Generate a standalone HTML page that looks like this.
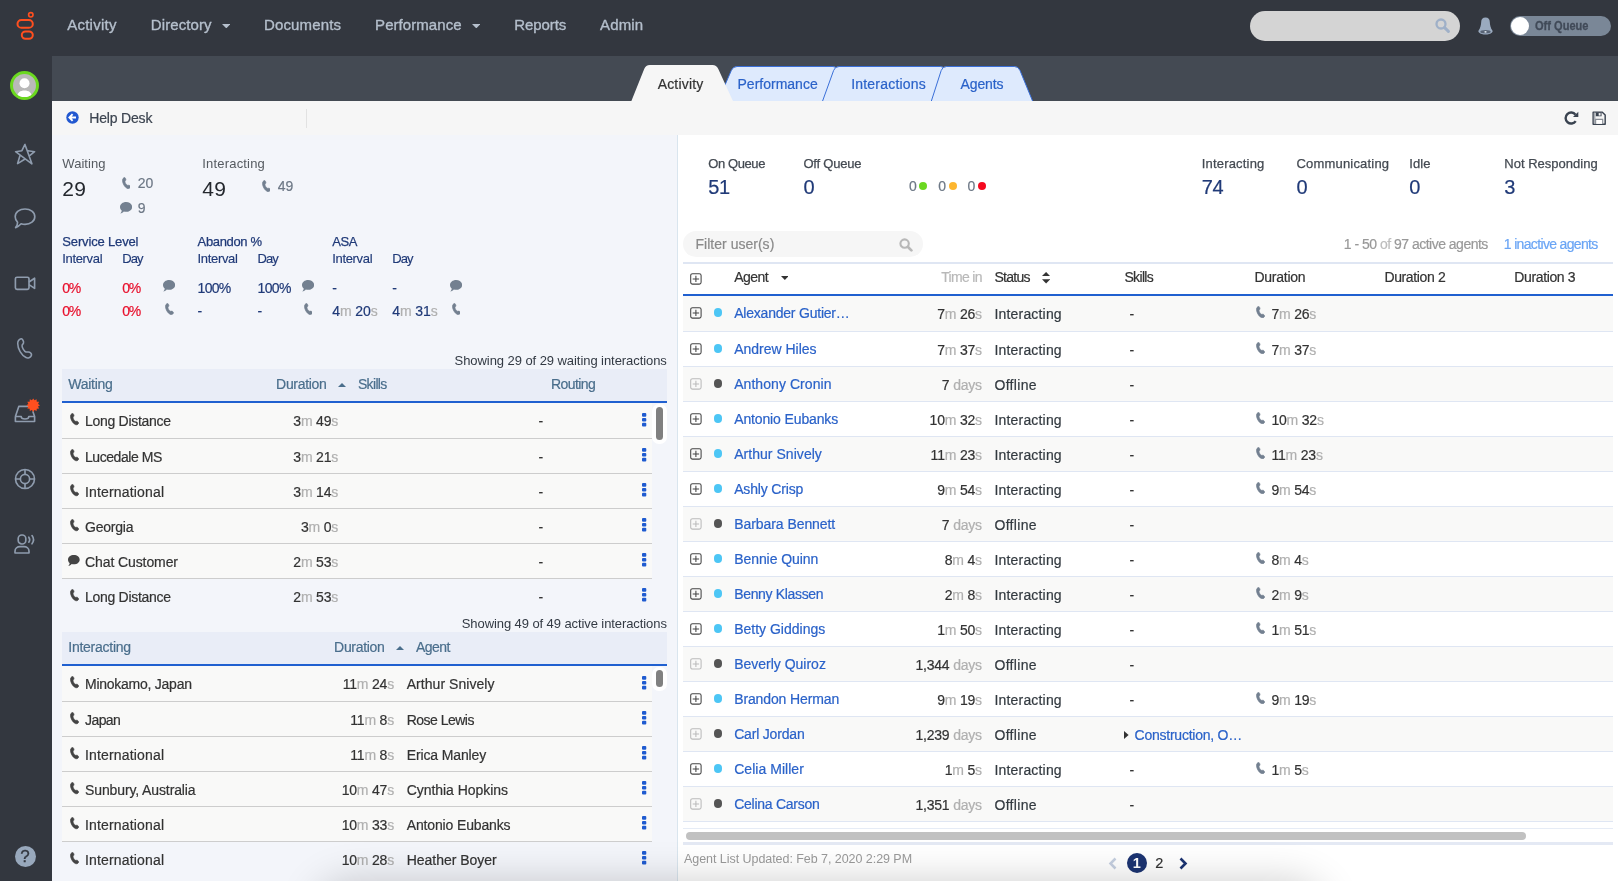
<!DOCTYPE html>
<html lang="en"><head><meta charset="utf-8"><title>Help Desk - Queue Activity</title>
<style>
html,body{margin:0;padding:0}
body{width:1618px;height:881px;overflow:hidden;position:relative;background:#fff;font-family:"Liberation Sans",sans-serif}
.t{position:absolute;white-space:nowrap;line-height:1;display:block}
.b{position:absolute;display:block}
</style></head><body><div id="app" style="position:absolute;left:0;top:0;width:1618px;height:881px;will-change:transform">
<div class="b" style="left:0px;top:0px;width:1618px;height:56px;background:#33373f;"></div>
<div class="b" style="left:0px;top:0px;width:52px;height:881px;background:#33373f;"></div>
<div class="b" style="left:52px;top:56px;width:1566px;height:45px;background:#444a53;"></div>
<div class="b" style="left:52px;top:101px;width:1566px;height:33.7px;background:#f6f6f6;"></div>
<div class="b" style="left:52px;top:134.7px;width:625px;height:746.3px;background:#f3f5fa;"></div>
<div class="b" style="left:677px;top:134.7px;width:941px;height:746.3px;background:#fff;border-left:1px solid #d9e5ee;box-sizing:border-box;"></div>
<svg class="b" style="left:0px;top:0px;" width="52" height="52" viewBox="0 0 52 52"><g fill="none" stroke="#ff4f1f"><circle cx="30.8" cy="14.8" r="2.2" stroke-width="1.65"/><rect x="17.5" y="20" width="15.3" height="7.8" rx="3.9" stroke-width="2"/><rect x="21.8" y="31.4" width="11" height="7.4" rx="3.7" stroke-width="2"/></g></svg>
<span class="t" style="top:17px;font-size:15px;color:#b5bfcc;left:67.2px;letter-spacing:0.249px;-webkit-text-stroke:0.35px;">Activity</span>
<span class="t" style="top:17px;font-size:15px;color:#b5bfcc;left:150.8px;letter-spacing:0.088px;-webkit-text-stroke:0.35px;">Directory</span>
<span class="t" style="top:17px;font-size:15px;color:#b5bfcc;left:264px;letter-spacing:0.149px;-webkit-text-stroke:0.35px;">Documents</span>
<span class="t" style="top:17px;font-size:15px;color:#b5bfcc;left:375.1px;letter-spacing:0.058px;-webkit-text-stroke:0.35px;">Performance</span>
<span class="t" style="top:17px;font-size:15px;color:#b5bfcc;left:514.3px;letter-spacing:-0.088px;-webkit-text-stroke:0.35px;">Reports</span>
<span class="t" style="top:17px;font-size:15px;color:#b5bfcc;left:600.1px;letter-spacing:0.137px;-webkit-text-stroke:0.35px;">Admin</span>
<svg class="b" style="left:221.8px;top:23.5px;" width="8.6" height="4.4" viewBox="0 0 8.6 4.4"><path d="M0 0H8.6L4.3 4.4Z" fill="#b5bfcc"/></svg>
<svg class="b" style="left:471.8px;top:23.5px;" width="8.6" height="4.4" viewBox="0 0 8.6 4.4"><path d="M0 0H8.6L4.3 4.4Z" fill="#b5bfcc"/></svg>
<div class="b" style="left:1250px;top:11px;width:210px;height:30px;background:#d4d4d4;border-radius:15px;"></div>
<svg class="b" style="left:1435px;top:18px;" width="15" height="15" viewBox="0 0 15 15"><circle cx="6" cy="6" r="4.5" fill="none" stroke="#9fb0c8" stroke-width="2.3"/><path d="M9.6 9.6L13.4 13.4" stroke="#9fb0c8" stroke-width="2.9" stroke-linecap="round"/></svg>
<svg class="b" style="left:1477.5px;top:16.5px;" width="15" height="18.5" viewBox="0 0 15 18.5"><path d="M7.5 0.6C4.6 0.6 3.3 2.4 3.2 5C3.1 8.2 2.3 11.2 0.6 13.6C0.2 14.3 0.4 15 1 15.5C2.4 16.9 5 17.6 7.5 17.6C10 17.6 12.6 16.9 14 15.5C14.6 15 14.8 14.3 14.4 13.6C12.7 11.2 11.9 8.2 11.8 5C11.7 2.4 10.4 0.6 7.5 0.6Z" fill="#9aaabf"/><ellipse cx="7.5" cy="14.7" rx="5.2" ry="1.6" fill="#586374"/><ellipse cx="7.5" cy="14.9" rx="1.2" ry="0.8" fill="#dfe6ee"/></svg>
<div class="b" style="left:1510px;top:16px;width:101px;height:20px;background:#7a8797;border-radius:10px;"></div>
<div class="b" style="left:1510.6px;top:16.6px;width:18.8px;height:18.8px;background:#fff;border-radius:50%;"></div>
<span class="t" style="top:19px;font-size:13px;color:#414a58;left:1534.6px;font-weight:700;-webkit-text-stroke:0.3px;transform:scaleX(0.851);transform-origin:0 0;">Off Queue</span>
<div class="b" style="left:10px;top:71px;width:29px;height:29px;background:#b9b9b9;border-radius:50%;border:3px solid #6bd820;box-sizing:border-box;overflow:hidden;"></div>
<svg class="b" style="left:13px;top:74px;" width="23" height="23" viewBox="0 0 23 23"><defs><clipPath id="av"><circle cx="11.5" cy="11.5" r="11.5"/></clipPath></defs><g clip-path="url(#av)" fill="#fff"><circle cx="11.5" cy="9.2" r="5"/><path d="M4.2 23C4.2 18.6 7.4 16.6 11.5 16.6C15.6 16.6 18.8 18.6 18.8 23Z"/></g></svg>
<svg class="b" style="left:13px;top:142px;" width="24" height="24" viewBox="0 0 24 24"><path d="M11.96 2.4L8.9 8.7L2.6 9.7L18.9 21.8Z M15 8.7L21.6 9.7L17.3 13.2 M6.85 14L4.6 21.6L11.3 17.5" fill="none" stroke="#8f9cae" stroke-width="1.6" stroke-linejoin="round" stroke-linecap="round"/></svg>
<svg class="b" style="left:13px;top:207px;" width="24" height="23" viewBox="0 0 24 23"><path d="M12 2C17.5 2 21.8 5.3 21.8 9.7C21.8 14.1 17.5 17.4 12 17.4C10.6 17.4 9.3 17.2 8.1 16.8C6.8 18.3 4.6 19.9 2.6 20.6C3.8 19.1 4.6 17.1 4.6 15.3C3 13.8 2.2 11.9 2.2 9.7C2.2 5.3 6.5 2 12 2Z" fill="none" stroke="#8f9cae" stroke-width="1.65" stroke-linejoin="round"/></svg>
<svg class="b" style="left:13px;top:274px;" width="24" height="18" viewBox="0 0 24 18"><rect x="2.4" y="3.2" width="13.6" height="12.2" rx="1.6" fill="none" stroke="#8f9cae" stroke-width="1.65"/><path d="M16 8L21.6 4.2V14.4L16 10.6" fill="none" stroke="#8f9cae" stroke-width="1.65" stroke-linejoin="round"/></svg>
<svg class="b" style="left:15px;top:336px;" width="20" height="25" viewBox="0 0 20 25"><g transform="translate(2.4,2.6) scale(1.62)"><path d="M2.3 0.1C3.1 -0.1 3.5 1 3.8 2C4.1 3 3.3 3.4 2.9 4C2.6 5.3 4.2 7.8 5.3 8.3C6 8.5 6.6 7.9 7.5 8.4C8.3 8.9 9 9.6 8.6 10.5C8.1 11.7 6.5 12.3 5.3 11.7C2.4 10.3 0.2 6.3 0.2 3C0.2 1.5 1.2 0.4 2.3 0.1Z" fill="none" stroke="#8f9cae" stroke-width="0.95" stroke-linejoin="round"/></g></svg>
<svg class="b" style="left:13px;top:396px;" width="28" height="28" viewBox="0 0 28 28"><path d="M2.4 20.5L5.8 10.4H16.5M2.4 20.5V25.5H21.6V20.5M2.4 20.5H8.2C8.2 22.3 9.8 23 12 23C14.2 23 15.8 22.3 15.8 20.5H21.6L19.8 15.2" fill="none" stroke="#8f9cae" stroke-width="1.65" stroke-linejoin="round"/><polygon fill="#ff4f1f" points="27,9.2 25.03,10.49 26.09,12.6 23.74,12.74 23.6,15.09 21.49,14.03 20.2,16 18.91,14.03 16.8,15.09 16.66,12.74 14.31,12.6 15.37,10.49 13.4,9.2 15.37,7.91 14.31,5.8 16.66,5.66 16.8,3.31 18.91,4.37 20.2,2.4 21.49,4.37 23.6,3.31 23.74,5.66 26.09,5.8 25.03,7.91"/></svg>
<svg class="b" style="left:13px;top:466.5px;" width="24" height="24" viewBox="0 0 24 24"><g fill="none" stroke="#8f9cae" stroke-width="1.65"><circle cx="12" cy="12" r="9.5"/><circle cx="12" cy="12" r="4.6"/><path d="M12 2.5V7.4M12 16.6V21.5M2.5 12H7.4M16.6 12H21.5"/></g></svg>
<svg class="b" style="left:13px;top:532px;" width="24" height="24" viewBox="0 0 24 24"><g fill="none" stroke="#8f9cae" stroke-width="1.65" stroke-linejoin="round"><rect x="5.2" y="3" width="7.6" height="9" rx="3.6"/><path d="M2 21V19.2C2 16.4 4.4 14.6 7 14.6H11C13.6 14.6 16 16.4 16 19.2V21Z"/><path d="M15.8 5.2C16.8 6.6 16.8 8.8 15.8 10.2M19 3.6C20.8 6 20.8 9.4 19 11.8" stroke-linecap="round"/></g></svg>
<div class="b" style="left:14.6px;top:845.6px;width:21px;height:21px;background:#98a8bc;border-radius:50%;"></div>
<span class="t" style="top:848px;font-size:17px;color:#33373f;left:25.1px;-webkit-text-stroke:0.3px;transform:translateX(-50%);">?</span>
<svg class="b" style="left:0;top:0" width="1618" height="101" viewBox="0 0 1618 101"><path d="M716.7 104 L731.3 70.5 Q733 66.5 737 66.5 L833 66.5 Q837 66.5 837.6 70.5 L842.4 104Z" fill="#deeafd" stroke="#3a6fd8" stroke-width="1"/><path d="M821.5 104 L833.6 70.5 Q835 66.5 839 66.5 L940.5 66.5 Q944.5 66.5 945 70.5 L949.4 104Z" fill="#deeafd" stroke="#3a6fd8" stroke-width="1"/><path d="M930.4 104 L941.2 70.5 Q942.5 66.5 946.5 66.5 L1014.4 66.5 Q1018.4 66.5 1020 70.5 L1033.8 104Z" fill="#deeafd" stroke="#3a6fd8" stroke-width="1"/><path d="M630.2 104 L644.2 69 Q645.8 65 649.8 65 L712.5 65 Q716.5 65 718.3 69 L734.3 104Z" fill="#f6f6f6" /></svg>
<span class="t" style="top:77px;font-size:14px;color:#333;left:657.7px;letter-spacing:0.17px;-webkit-text-stroke:0.2px;">Activity</span>
<span class="t" style="top:77px;font-size:14px;color:#2a62c9;left:737.5px;letter-spacing:0.006px;-webkit-text-stroke:0.2px;">Performance</span>
<span class="t" style="top:77px;font-size:14px;color:#2a62c9;left:851.2px;letter-spacing:0.203px;-webkit-text-stroke:0.2px;">Interactions</span>
<span class="t" style="top:77px;font-size:14px;color:#2a62c9;left:960.5px;letter-spacing:-0.097px;-webkit-text-stroke:0.2px;">Agents</span>
<svg class="b" style="left:66.1px;top:111.4px;" width="13" height="13" viewBox="0 0 13 13"><circle cx="6.5" cy="6.5" r="6.2" fill="#2258d0"/><path d="M6.6 3.2L3.4 6.5L6.6 9.8M3.6 6.5H10" fill="none" stroke="#fff" stroke-width="1.9"/></svg>
<span class="t" style="top:111px;font-size:14px;color:#3c4450;left:89.2px;letter-spacing:-0.164px;-webkit-text-stroke:0.2px;">Help Desk</span>
<div class="b" style="left:305.5px;top:108.5px;width:1px;height:19.5px;background:#e2e2e2;"></div>
<svg class="b" style="left:1563.6px;top:111px;" width="15" height="14" viewBox="0 0 15 14"><path d="M11.5 3.7A5.5 5.5 0 1 0 11.7 10.1" fill="none" stroke="#3a4350" stroke-width="2.4"/><path d="M14.3 0.7V6H9Z" fill="#3a4350"/></svg>
<svg class="b" style="left:1591.6px;top:110.6px;" width="15" height="15" viewBox="0 0 15 15"><g transform="scale(0.955)"><path d="M1.2 1.2H10.8L13.8 4.2V13.8H1.2Z" fill="#f6f6f6" stroke="#3a4350" stroke-width="1.5" stroke-linejoin="round"/><path d="M1.9 1.9H3.6V13.1H1.9Z" fill="#a9adb3"/><path d="M4 1.5H10V5.5H4Z" fill="#3a4350"/><path d="M7 2.2H9V4.8H7Z" fill="#f6f6f6"/><path d="M3.8 13.5V8.8H11.2V13.5" fill="#fff" stroke="#8a8f97" stroke-width="1.2"/></g></svg>
<span class="t" style="top:157px;font-size:13px;color:#555a60;left:62.3px;letter-spacing:0.048px;">Waiting</span>
<span class="t" style="top:178px;font-size:21px;color:#23272d;left:62.3px;letter-spacing:0.172px;">29</span>
<svg class="b" style="left:121.6px;top:177px;" width="8.8" height="12.2" viewBox="-0.3 -0.3 9.4 12.6"><path d="M2.3 0.1C3.1 -0.1 3.5 1 3.8 2C4.1 3 3.3 3.4 2.9 4C2.6 5.3 4.2 7.8 5.3 8.3C6 8.5 6.6 7.9 7.5 8.4C8.3 8.9 9 9.6 8.6 10.5C8.1 11.7 6.5 12.3 5.3 11.7C2.4 10.3 0.2 6.3 0.2 3C0.2 1.5 1.2 0.4 2.3 0.1Z" fill="#738090" stroke="#738090" stroke-width="0.7" stroke-linejoin="round"/></svg>
<span class="t" style="top:176px;font-size:14px;color:#6d7886;left:137.8px;letter-spacing:-0.035px;-webkit-text-stroke:0.2px;">20</span>
<svg class="b" style="left:119.9px;top:202.2px;" width="12.3" height="11.5" viewBox="0 0 12.3 11.5"><path d="M6.1 0C9.5 0 12.2 2.2 12.2 4.9C12.2 7.6 9.5 9.8 6.1 9.8C5.3 9.8 4.5 9.7 3.8 9.4C3 10.3 1.7 11.2 0.3 11.4C1.2 10.6 1.7 9.5 1.7 8.4C0.6 7.5 0 6.3 0 4.9C0 2.2 2.7 0 6.1 0Z" fill="#738090"/></svg>
<span class="t" style="top:201px;font-size:14px;color:#6d7886;left:137.8px;-webkit-text-stroke:0.2px;">9</span>
<span class="t" style="top:157px;font-size:13px;color:#555a60;left:202.3px;letter-spacing:0.182px;">Interacting</span>
<span class="t" style="top:178px;font-size:21px;color:#23272d;left:202.3px;letter-spacing:0.272px;">49</span>
<svg class="b" style="left:261.6px;top:179.8px;" width="8.8" height="12.2" viewBox="-0.3 -0.3 9.4 12.6"><path d="M2.3 0.1C3.1 -0.1 3.5 1 3.8 2C4.1 3 3.3 3.4 2.9 4C2.6 5.3 4.2 7.8 5.3 8.3C6 8.5 6.6 7.9 7.5 8.4C8.3 8.9 9 9.6 8.6 10.5C8.1 11.7 6.5 12.3 5.3 11.7C2.4 10.3 0.2 6.3 0.2 3C0.2 1.5 1.2 0.4 2.3 0.1Z" fill="#738090" stroke="#738090" stroke-width="0.7" stroke-linejoin="round"/></svg>
<span class="t" style="top:179px;font-size:14px;color:#6d7886;left:277.8px;letter-spacing:-0.135px;-webkit-text-stroke:0.2px;">49</span>
<span class="t" style="top:235px;font-size:13px;color:#203a78;left:62.3px;letter-spacing:-0.157px;-webkit-text-stroke:0.25px;">Service Level</span>
<span class="t" style="top:252px;font-size:13px;color:#203a78;left:62.3px;letter-spacing:-0.341px;-webkit-text-stroke:0.15px;">Interval</span>
<span class="t" style="top:252px;font-size:13px;color:#203a78;left:122.3px;letter-spacing:-0.939px;-webkit-text-stroke:0.15px;">Day</span>
<span class="t" style="top:235px;font-size:13px;color:#203a78;left:197.6px;letter-spacing:-0.358px;-webkit-text-stroke:0.25px;">Abandon %</span>
<span class="t" style="top:252px;font-size:13px;color:#203a78;left:197.6px;letter-spacing:-0.341px;-webkit-text-stroke:0.15px;">Interval</span>
<span class="t" style="top:252px;font-size:13px;color:#203a78;left:257.6px;letter-spacing:-0.939px;-webkit-text-stroke:0.15px;">Day</span>
<span class="t" style="top:235px;font-size:13px;color:#203a78;left:332.3px;letter-spacing:-0.505px;-webkit-text-stroke:0.25px;">ASA</span>
<span class="t" style="top:252px;font-size:13px;color:#203a78;left:332.3px;letter-spacing:-0.341px;-webkit-text-stroke:0.15px;">Interval</span>
<span class="t" style="top:252px;font-size:13px;color:#203a78;left:392.3px;letter-spacing:-0.939px;-webkit-text-stroke:0.15px;">Day</span>
<span class="t" style="top:281px;font-size:14px;color:#e8112d;left:62.3px;letter-spacing:-1.267px;-webkit-text-stroke:0.2px;">0%</span>
<span class="t" style="top:281px;font-size:14px;color:#e8112d;left:122.3px;letter-spacing:-1.267px;-webkit-text-stroke:0.2px;">0%</span>
<span class="t" style="top:304px;font-size:14px;color:#e8112d;left:62.3px;letter-spacing:-1.267px;-webkit-text-stroke:0.2px;">0%</span>
<span class="t" style="top:304px;font-size:14px;color:#e8112d;left:122.3px;letter-spacing:-1.267px;-webkit-text-stroke:0.2px;">0%</span>
<span class="t" style="top:281px;font-size:14px;color:#203a78;left:197.6px;letter-spacing:-0.726px;-webkit-text-stroke:0.2px;">100%</span>
<span class="t" style="top:281px;font-size:14px;color:#203a78;left:257.5px;letter-spacing:-0.651px;-webkit-text-stroke:0.2px;">100%</span>
<span class="t" style="top:304px;font-size:14px;color:#203a78;left:197.6px;-webkit-text-stroke:0.2px;">-</span>
<span class="t" style="top:304px;font-size:14px;color:#203a78;left:257.5px;-webkit-text-stroke:0.2px;">-</span>
<span class="t" style="top:281px;font-size:14px;color:#203a78;left:332.3px;-webkit-text-stroke:0.2px;">-</span>
<span class="t" style="top:281px;font-size:14px;color:#203a78;left:392.3px;-webkit-text-stroke:0.2px;">-</span>
<span class="t" style="top:304px;font-size:14px;color:#203a78;left:332.3px;letter-spacing:-0.1px;-webkit-text-stroke:0.2px;">4<span style="color:#b0b0b0">m</span> 20<span style="color:#b0b0b0">s</span></span>
<span class="t" style="top:304px;font-size:14px;color:#203a78;left:392.3px;letter-spacing:-0.1px;-webkit-text-stroke:0.2px;">4<span style="color:#b0b0b0">m</span> 31<span style="color:#b0b0b0">s</span></span>
<svg class="b" style="left:163px;top:280.2px;" width="12.3" height="11.5" viewBox="0 0 12.3 11.5"><path d="M6.1 0C9.5 0 12.2 2.2 12.2 4.9C12.2 7.6 9.5 9.8 6.1 9.8C5.3 9.8 4.5 9.7 3.8 9.4C3 10.3 1.7 11.2 0.3 11.4C1.2 10.6 1.7 9.5 1.7 8.4C0.6 7.5 0 6.3 0 4.9C0 2.2 2.7 0 6.1 0Z" fill="#738090"/></svg>
<svg class="b" style="left:301.7px;top:280.2px;" width="12.3" height="11.5" viewBox="0 0 12.3 11.5"><path d="M6.1 0C9.5 0 12.2 2.2 12.2 4.9C12.2 7.6 9.5 9.8 6.1 9.8C5.3 9.8 4.5 9.7 3.8 9.4C3 10.3 1.7 11.2 0.3 11.4C1.2 10.6 1.7 9.5 1.7 8.4C0.6 7.5 0 6.3 0 4.9C0 2.2 2.7 0 6.1 0Z" fill="#738090"/></svg>
<svg class="b" style="left:449.8px;top:280.2px;" width="12.3" height="11.5" viewBox="0 0 12.3 11.5"><path d="M6.1 0C9.5 0 12.2 2.2 12.2 4.9C12.2 7.6 9.5 9.8 6.1 9.8C5.3 9.8 4.5 9.7 3.8 9.4C3 10.3 1.7 11.2 0.3 11.4C1.2 10.6 1.7 9.5 1.7 8.4C0.6 7.5 0 6.3 0 4.9C0 2.2 2.7 0 6.1 0Z" fill="#738090"/></svg>
<svg class="b" style="left:164.8px;top:303.1px;" width="8.8" height="12.1" viewBox="-0.3 -0.3 9.4 12.6"><path d="M2.3 0.1C3.1 -0.1 3.5 1 3.8 2C4.1 3 3.3 3.4 2.9 4C2.6 5.3 4.2 7.8 5.3 8.3C6 8.5 6.6 7.9 7.5 8.4C8.3 8.9 9 9.6 8.6 10.5C8.1 11.7 6.5 12.3 5.3 11.7C2.4 10.3 0.2 6.3 0.2 3C0.2 1.5 1.2 0.4 2.3 0.1Z" fill="#738090" stroke="#738090" stroke-width="0.7" stroke-linejoin="round"/></svg>
<svg class="b" style="left:303.5px;top:303.1px;" width="8.8" height="12.1" viewBox="-0.3 -0.3 9.4 12.6"><path d="M2.3 0.1C3.1 -0.1 3.5 1 3.8 2C4.1 3 3.3 3.4 2.9 4C2.6 5.3 4.2 7.8 5.3 8.3C6 8.5 6.6 7.9 7.5 8.4C8.3 8.9 9 9.6 8.6 10.5C8.1 11.7 6.5 12.3 5.3 11.7C2.4 10.3 0.2 6.3 0.2 3C0.2 1.5 1.2 0.4 2.3 0.1Z" fill="#738090" stroke="#738090" stroke-width="0.7" stroke-linejoin="round"/></svg>
<svg class="b" style="left:451.6px;top:303.1px;" width="8.8" height="12.1" viewBox="-0.3 -0.3 9.4 12.6"><path d="M2.3 0.1C3.1 -0.1 3.5 1 3.8 2C4.1 3 3.3 3.4 2.9 4C2.6 5.3 4.2 7.8 5.3 8.3C6 8.5 6.6 7.9 7.5 8.4C8.3 8.9 9 9.6 8.6 10.5C8.1 11.7 6.5 12.3 5.3 11.7C2.4 10.3 0.2 6.3 0.2 3C0.2 1.5 1.2 0.4 2.3 0.1Z" fill="#738090" stroke="#738090" stroke-width="0.7" stroke-linejoin="round"/></svg>
<span class="t" style="top:354px;font-size:13px;color:#333a44;right:951.2px;letter-spacing:-0.065px;">Showing 29 of 29 waiting interactions</span>
<div class="b" style="left:62px;top:369px;width:605px;height:32px;background:#e9edf7;"></div>
<div class="b" style="left:62px;top:400.6px;width:605px;height:2.6px;background:#2060d0;"></div>
<span class="t" style="top:377px;font-size:14px;color:#4a6e8c;left:68.3px;letter-spacing:-0.266px;-webkit-text-stroke:0.2px;">Waiting</span>
<span class="t" style="top:377px;font-size:14px;color:#4a6e8c;left:276.1px;letter-spacing:-0.314px;-webkit-text-stroke:0.2px;">Duration</span>
<svg class="b" style="left:338px;top:383.3px;" width="8" height="4" viewBox="0 0 8 4"><path d="M0 4H8L4 0Z" fill="#4a6e8c"/></svg>
<span class="t" style="top:377px;font-size:14px;color:#4a6e8c;left:357.9px;letter-spacing:-0.645px;-webkit-text-stroke:0.2px;">Skills</span>
<span class="t" style="top:377px;font-size:14px;color:#4a6e8c;left:551.1px;letter-spacing:-0.607px;-webkit-text-stroke:0.2px;">Routing</span>
<div class="b" style="left:62px;top:403px;width:590px;height:35px;background:#f9f9f8;"></div>
<div class="b" style="left:62px;top:438px;width:590px;height:1px;background:#cdcdcd;"></div>
<svg class="b" style="left:70.4px;top:413.4px;" width="9" height="12.2" viewBox="-0.3 -0.3 9.4 12.6"><path d="M2.3 0.1C3.1 -0.1 3.5 1 3.8 2C4.1 3 3.3 3.4 2.9 4C2.6 5.3 4.2 7.8 5.3 8.3C6 8.5 6.6 7.9 7.5 8.4C8.3 8.9 9 9.6 8.6 10.5C8.1 11.7 6.5 12.3 5.3 11.7C2.4 10.3 0.2 6.3 0.2 3C0.2 1.5 1.2 0.4 2.3 0.1Z" fill="#444" stroke="#444" stroke-width="0.7" stroke-linejoin="round"/></svg>
<span class="t" style="top:414px;font-size:14px;color:#333;left:85px;letter-spacing:-0.284px;-webkit-text-stroke:0.2px;">Long Distance</span>
<span class="t" style="top:414px;font-size:14px;color:#333;right:1279.9px;letter-spacing:-0.2px;-webkit-text-stroke:0.2px;">3<span style="color:#b0b0b0">m</span> 49<span style="color:#b0b0b0">s</span></span>
<span class="t" style="top:414px;font-size:14px;color:#333;left:538.4px;-webkit-text-stroke:0.2px;">-</span>
<svg class="b" style="left:642.2px;top:413.1px;" width="4.4" height="14" viewBox="0 0 4.4 14"><rect x="0" y="0" width="4.3" height="3.7" rx="1" fill="#1f5bd0"/><rect x="0" y="4.9" width="4.3" height="3.7" rx="1" fill="#1f5bd0"/><rect x="0" y="9.8" width="4.3" height="3.7" rx="1" fill="#1f5bd0"/></svg>
<div class="b" style="left:62px;top:439px;width:590px;height:34px;background:#f9f9f8;"></div>
<div class="b" style="left:62px;top:473px;width:590px;height:1px;background:#cdcdcd;"></div>
<svg class="b" style="left:70.4px;top:449.4px;" width="9" height="12.2" viewBox="-0.3 -0.3 9.4 12.6"><path d="M2.3 0.1C3.1 -0.1 3.5 1 3.8 2C4.1 3 3.3 3.4 2.9 4C2.6 5.3 4.2 7.8 5.3 8.3C6 8.5 6.6 7.9 7.5 8.4C8.3 8.9 9 9.6 8.6 10.5C8.1 11.7 6.5 12.3 5.3 11.7C2.4 10.3 0.2 6.3 0.2 3C0.2 1.5 1.2 0.4 2.3 0.1Z" fill="#444" stroke="#444" stroke-width="0.7" stroke-linejoin="round"/></svg>
<span class="t" style="top:450px;font-size:14px;color:#333;left:85px;letter-spacing:-0.437px;-webkit-text-stroke:0.2px;">Lucedale MS</span>
<span class="t" style="top:450px;font-size:14px;color:#333;right:1279.9px;letter-spacing:-0.2px;-webkit-text-stroke:0.2px;">3<span style="color:#b0b0b0">m</span> 21<span style="color:#b0b0b0">s</span></span>
<span class="t" style="top:450px;font-size:14px;color:#333;left:538.4px;-webkit-text-stroke:0.2px;">-</span>
<svg class="b" style="left:642.2px;top:448.1px;" width="4.4" height="14" viewBox="0 0 4.4 14"><rect x="0" y="0" width="4.3" height="3.7" rx="1" fill="#1f5bd0"/><rect x="0" y="4.9" width="4.3" height="3.7" rx="1" fill="#1f5bd0"/><rect x="0" y="9.8" width="4.3" height="3.7" rx="1" fill="#1f5bd0"/></svg>
<div class="b" style="left:62px;top:474px;width:590px;height:34px;background:#f9f9f8;"></div>
<div class="b" style="left:62px;top:508px;width:590px;height:1px;background:#cdcdcd;"></div>
<svg class="b" style="left:70.4px;top:484.4px;" width="9" height="12.2" viewBox="-0.3 -0.3 9.4 12.6"><path d="M2.3 0.1C3.1 -0.1 3.5 1 3.8 2C4.1 3 3.3 3.4 2.9 4C2.6 5.3 4.2 7.8 5.3 8.3C6 8.5 6.6 7.9 7.5 8.4C8.3 8.9 9 9.6 8.6 10.5C8.1 11.7 6.5 12.3 5.3 11.7C2.4 10.3 0.2 6.3 0.2 3C0.2 1.5 1.2 0.4 2.3 0.1Z" fill="#444" stroke="#444" stroke-width="0.7" stroke-linejoin="round"/></svg>
<span class="t" style="top:485px;font-size:14px;color:#333;left:85px;letter-spacing:0.166px;-webkit-text-stroke:0.2px;">International</span>
<span class="t" style="top:485px;font-size:14px;color:#333;right:1279.9px;letter-spacing:-0.2px;-webkit-text-stroke:0.2px;">3<span style="color:#b0b0b0">m</span> 14<span style="color:#b0b0b0">s</span></span>
<span class="t" style="top:485px;font-size:14px;color:#333;left:538.4px;-webkit-text-stroke:0.2px;">-</span>
<svg class="b" style="left:642.2px;top:483.1px;" width="4.4" height="14" viewBox="0 0 4.4 14"><rect x="0" y="0" width="4.3" height="3.7" rx="1" fill="#1f5bd0"/><rect x="0" y="4.9" width="4.3" height="3.7" rx="1" fill="#1f5bd0"/><rect x="0" y="9.8" width="4.3" height="3.7" rx="1" fill="#1f5bd0"/></svg>
<div class="b" style="left:62px;top:509px;width:590px;height:34px;background:#f9f9f8;"></div>
<div class="b" style="left:62px;top:543px;width:590px;height:1px;background:#cdcdcd;"></div>
<svg class="b" style="left:70.4px;top:519.4px;" width="9" height="12.2" viewBox="-0.3 -0.3 9.4 12.6"><path d="M2.3 0.1C3.1 -0.1 3.5 1 3.8 2C4.1 3 3.3 3.4 2.9 4C2.6 5.3 4.2 7.8 5.3 8.3C6 8.5 6.6 7.9 7.5 8.4C8.3 8.9 9 9.6 8.6 10.5C8.1 11.7 6.5 12.3 5.3 11.7C2.4 10.3 0.2 6.3 0.2 3C0.2 1.5 1.2 0.4 2.3 0.1Z" fill="#444" stroke="#444" stroke-width="0.7" stroke-linejoin="round"/></svg>
<span class="t" style="top:520px;font-size:14px;color:#333;left:85px;letter-spacing:-0.215px;-webkit-text-stroke:0.2px;">Georgia</span>
<span class="t" style="top:520px;font-size:14px;color:#333;right:1279.9px;letter-spacing:-0.2px;-webkit-text-stroke:0.2px;">3<span style="color:#b0b0b0">m</span> 0<span style="color:#b0b0b0">s</span></span>
<span class="t" style="top:520px;font-size:14px;color:#333;left:538.4px;-webkit-text-stroke:0.2px;">-</span>
<svg class="b" style="left:642.2px;top:518.1px;" width="4.4" height="14" viewBox="0 0 4.4 14"><rect x="0" y="0" width="4.3" height="3.7" rx="1" fill="#1f5bd0"/><rect x="0" y="4.9" width="4.3" height="3.7" rx="1" fill="#1f5bd0"/><rect x="0" y="9.8" width="4.3" height="3.7" rx="1" fill="#1f5bd0"/></svg>
<div class="b" style="left:62px;top:544px;width:590px;height:34px;background:#f9f9f8;"></div>
<div class="b" style="left:62px;top:578px;width:590px;height:1px;background:#cdcdcd;"></div>
<svg class="b" style="left:68.2px;top:555px;" width="11.8" height="11" viewBox="0 0 12.3 11.5"><path d="M6.1 0C9.5 0 12.2 2.2 12.2 4.9C12.2 7.6 9.5 9.8 6.1 9.8C5.3 9.8 4.5 9.7 3.8 9.4C3 10.3 1.7 11.2 0.3 11.4C1.2 10.6 1.7 9.5 1.7 8.4C0.6 7.5 0 6.3 0 4.9C0 2.2 2.7 0 6.1 0Z" fill="#444"/></svg>
<span class="t" style="top:555px;font-size:14px;color:#333;left:85px;letter-spacing:-0.095px;-webkit-text-stroke:0.2px;">Chat Customer</span>
<span class="t" style="top:555px;font-size:14px;color:#333;right:1279.9px;letter-spacing:-0.2px;-webkit-text-stroke:0.2px;">2<span style="color:#b0b0b0">m</span> 53<span style="color:#b0b0b0">s</span></span>
<span class="t" style="top:555px;font-size:14px;color:#333;left:538.4px;-webkit-text-stroke:0.2px;">-</span>
<svg class="b" style="left:642.2px;top:553.1px;" width="4.4" height="14" viewBox="0 0 4.4 14"><rect x="0" y="0" width="4.3" height="3.7" rx="1" fill="#1f5bd0"/><rect x="0" y="4.9" width="4.3" height="3.7" rx="1" fill="#1f5bd0"/><rect x="0" y="9.8" width="4.3" height="3.7" rx="1" fill="#1f5bd0"/></svg>
<svg class="b" style="left:70.4px;top:589.4px;" width="9" height="12.2" viewBox="-0.3 -0.3 9.4 12.6"><path d="M2.3 0.1C3.1 -0.1 3.5 1 3.8 2C4.1 3 3.3 3.4 2.9 4C2.6 5.3 4.2 7.8 5.3 8.3C6 8.5 6.6 7.9 7.5 8.4C8.3 8.9 9 9.6 8.6 10.5C8.1 11.7 6.5 12.3 5.3 11.7C2.4 10.3 0.2 6.3 0.2 3C0.2 1.5 1.2 0.4 2.3 0.1Z" fill="#444" stroke="#444" stroke-width="0.7" stroke-linejoin="round"/></svg>
<span class="t" style="top:590px;font-size:14px;color:#333;left:85px;letter-spacing:-0.284px;-webkit-text-stroke:0.2px;">Long Distance</span>
<span class="t" style="top:590px;font-size:14px;color:#333;right:1279.9px;letter-spacing:-0.2px;-webkit-text-stroke:0.2px;">2<span style="color:#b0b0b0">m</span> 53<span style="color:#b0b0b0">s</span></span>
<span class="t" style="top:590px;font-size:14px;color:#333;left:538.4px;-webkit-text-stroke:0.2px;">-</span>
<svg class="b" style="left:642.2px;top:588.1px;" width="4.4" height="14" viewBox="0 0 4.4 14"><rect x="0" y="0" width="4.3" height="3.7" rx="1" fill="#1f5bd0"/><rect x="0" y="4.9" width="4.3" height="3.7" rx="1" fill="#1f5bd0"/><rect x="0" y="9.8" width="4.3" height="3.7" rx="1" fill="#1f5bd0"/></svg>
<div class="b" style="left:652.3px;top:404px;width:14.7px;height:40px;background:#fff;border-radius:7px;"></div>
<div class="b" style="left:656.1px;top:407.1px;width:6.9px;height:33px;background:#808080;border-radius:3.5px;"></div>
<span class="t" style="top:617px;font-size:13px;color:#333a44;right:951.2px;letter-spacing:-0.086px;">Showing 49 of 49 active interactions</span>
<div class="b" style="left:62px;top:632px;width:605px;height:32px;background:#e9edf7;"></div>
<div class="b" style="left:62px;top:663.6px;width:605px;height:2.6px;background:#2060d0;"></div>
<span class="t" style="top:640px;font-size:14px;color:#4a6e8c;left:68.3px;letter-spacing:-0.261px;-webkit-text-stroke:0.2px;">Interacting</span>
<span class="t" style="top:640px;font-size:14px;color:#4a6e8c;left:334.1px;letter-spacing:-0.314px;-webkit-text-stroke:0.2px;">Duration</span>
<svg class="b" style="left:396px;top:646.3px;" width="8" height="4" viewBox="0 0 8 4"><path d="M0 4H8L4 0Z" fill="#4a6e8c"/></svg>
<span class="t" style="top:640px;font-size:14px;color:#4a6e8c;left:415.9px;letter-spacing:-0.517px;-webkit-text-stroke:0.2px;">Agent</span>
<div class="b" style="left:62px;top:666px;width:590px;height:35px;background:#f9f9f8;"></div>
<div class="b" style="left:62px;top:701px;width:590px;height:1px;background:#cdcdcd;"></div>
<svg class="b" style="left:70.4px;top:676.4px;" width="9" height="12.2" viewBox="-0.3 -0.3 9.4 12.6"><path d="M2.3 0.1C3.1 -0.1 3.5 1 3.8 2C4.1 3 3.3 3.4 2.9 4C2.6 5.3 4.2 7.8 5.3 8.3C6 8.5 6.6 7.9 7.5 8.4C8.3 8.9 9 9.6 8.6 10.5C8.1 11.7 6.5 12.3 5.3 11.7C2.4 10.3 0.2 6.3 0.2 3C0.2 1.5 1.2 0.4 2.3 0.1Z" fill="#444" stroke="#444" stroke-width="0.7" stroke-linejoin="round"/></svg>
<span class="t" style="top:677px;font-size:14px;color:#333;left:85px;letter-spacing:-0.253px;-webkit-text-stroke:0.2px;">Minokamo, Japan</span>
<span class="t" style="top:677px;font-size:14px;color:#333;right:1224px;letter-spacing:-0.2px;-webkit-text-stroke:0.2px;">11<span style="color:#b0b0b0">m</span> 24<span style="color:#b0b0b0">s</span></span>
<span class="t" style="top:677px;font-size:14px;color:#333;left:406.7px;letter-spacing:0.047px;-webkit-text-stroke:0.2px;">Arthur Snively</span>
<svg class="b" style="left:642.2px;top:676.1px;" width="4.4" height="14" viewBox="0 0 4.4 14"><rect x="0" y="0" width="4.3" height="3.7" rx="1" fill="#1f5bd0"/><rect x="0" y="4.9" width="4.3" height="3.7" rx="1" fill="#1f5bd0"/><rect x="0" y="9.8" width="4.3" height="3.7" rx="1" fill="#1f5bd0"/></svg>
<div class="b" style="left:62px;top:702px;width:590px;height:34px;background:#f9f9f8;"></div>
<div class="b" style="left:62px;top:736px;width:590px;height:1px;background:#cdcdcd;"></div>
<svg class="b" style="left:70.4px;top:712.4px;" width="9" height="12.2" viewBox="-0.3 -0.3 9.4 12.6"><path d="M2.3 0.1C3.1 -0.1 3.5 1 3.8 2C4.1 3 3.3 3.4 2.9 4C2.6 5.3 4.2 7.8 5.3 8.3C6 8.5 6.6 7.9 7.5 8.4C8.3 8.9 9 9.6 8.6 10.5C8.1 11.7 6.5 12.3 5.3 11.7C2.4 10.3 0.2 6.3 0.2 3C0.2 1.5 1.2 0.4 2.3 0.1Z" fill="#444" stroke="#444" stroke-width="0.7" stroke-linejoin="round"/></svg>
<span class="t" style="top:713px;font-size:14px;color:#333;left:85px;letter-spacing:-0.568px;-webkit-text-stroke:0.2px;">Japan</span>
<span class="t" style="top:713px;font-size:14px;color:#333;right:1224px;letter-spacing:-0.2px;-webkit-text-stroke:0.2px;">11<span style="color:#b0b0b0">m</span> 8<span style="color:#b0b0b0">s</span></span>
<span class="t" style="top:713px;font-size:14px;color:#333;left:406.7px;letter-spacing:-0.516px;-webkit-text-stroke:0.2px;">Rose Lewis</span>
<svg class="b" style="left:642.2px;top:711.1px;" width="4.4" height="14" viewBox="0 0 4.4 14"><rect x="0" y="0" width="4.3" height="3.7" rx="1" fill="#1f5bd0"/><rect x="0" y="4.9" width="4.3" height="3.7" rx="1" fill="#1f5bd0"/><rect x="0" y="9.8" width="4.3" height="3.7" rx="1" fill="#1f5bd0"/></svg>
<div class="b" style="left:62px;top:737px;width:590px;height:34px;background:#f9f9f8;"></div>
<div class="b" style="left:62px;top:771px;width:590px;height:1px;background:#cdcdcd;"></div>
<svg class="b" style="left:70.4px;top:747.4px;" width="9" height="12.2" viewBox="-0.3 -0.3 9.4 12.6"><path d="M2.3 0.1C3.1 -0.1 3.5 1 3.8 2C4.1 3 3.3 3.4 2.9 4C2.6 5.3 4.2 7.8 5.3 8.3C6 8.5 6.6 7.9 7.5 8.4C8.3 8.9 9 9.6 8.6 10.5C8.1 11.7 6.5 12.3 5.3 11.7C2.4 10.3 0.2 6.3 0.2 3C0.2 1.5 1.2 0.4 2.3 0.1Z" fill="#444" stroke="#444" stroke-width="0.7" stroke-linejoin="round"/></svg>
<span class="t" style="top:748px;font-size:14px;color:#333;left:85px;letter-spacing:0.166px;-webkit-text-stroke:0.2px;">International</span>
<span class="t" style="top:748px;font-size:14px;color:#333;right:1224px;letter-spacing:-0.2px;-webkit-text-stroke:0.2px;">11<span style="color:#b0b0b0">m</span> 8<span style="color:#b0b0b0">s</span></span>
<span class="t" style="top:748px;font-size:14px;color:#333;left:406.7px;letter-spacing:-0.126px;-webkit-text-stroke:0.2px;">Erica Manley</span>
<svg class="b" style="left:642.2px;top:746.1px;" width="4.4" height="14" viewBox="0 0 4.4 14"><rect x="0" y="0" width="4.3" height="3.7" rx="1" fill="#1f5bd0"/><rect x="0" y="4.9" width="4.3" height="3.7" rx="1" fill="#1f5bd0"/><rect x="0" y="9.8" width="4.3" height="3.7" rx="1" fill="#1f5bd0"/></svg>
<div class="b" style="left:62px;top:772px;width:590px;height:34px;background:#f9f9f8;"></div>
<div class="b" style="left:62px;top:806px;width:590px;height:1px;background:#cdcdcd;"></div>
<svg class="b" style="left:70.4px;top:782.4px;" width="9" height="12.2" viewBox="-0.3 -0.3 9.4 12.6"><path d="M2.3 0.1C3.1 -0.1 3.5 1 3.8 2C4.1 3 3.3 3.4 2.9 4C2.6 5.3 4.2 7.8 5.3 8.3C6 8.5 6.6 7.9 7.5 8.4C8.3 8.9 9 9.6 8.6 10.5C8.1 11.7 6.5 12.3 5.3 11.7C2.4 10.3 0.2 6.3 0.2 3C0.2 1.5 1.2 0.4 2.3 0.1Z" fill="#444" stroke="#444" stroke-width="0.7" stroke-linejoin="round"/></svg>
<span class="t" style="top:783px;font-size:14px;color:#333;left:85px;letter-spacing:-0.115px;-webkit-text-stroke:0.2px;">Sunbury, Australia</span>
<span class="t" style="top:783px;font-size:14px;color:#333;right:1224px;letter-spacing:-0.2px;-webkit-text-stroke:0.2px;">10<span style="color:#b0b0b0">m</span> 47<span style="color:#b0b0b0">s</span></span>
<span class="t" style="top:783px;font-size:14px;color:#333;left:406.7px;letter-spacing:-0.042px;-webkit-text-stroke:0.2px;">Cynthia Hopkins</span>
<svg class="b" style="left:642.2px;top:781.1px;" width="4.4" height="14" viewBox="0 0 4.4 14"><rect x="0" y="0" width="4.3" height="3.7" rx="1" fill="#1f5bd0"/><rect x="0" y="4.9" width="4.3" height="3.7" rx="1" fill="#1f5bd0"/><rect x="0" y="9.8" width="4.3" height="3.7" rx="1" fill="#1f5bd0"/></svg>
<div class="b" style="left:62px;top:807px;width:590px;height:34px;background:#f9f9f8;"></div>
<div class="b" style="left:62px;top:841px;width:590px;height:1px;background:#cdcdcd;"></div>
<svg class="b" style="left:70.4px;top:817.4px;" width="9" height="12.2" viewBox="-0.3 -0.3 9.4 12.6"><path d="M2.3 0.1C3.1 -0.1 3.5 1 3.8 2C4.1 3 3.3 3.4 2.9 4C2.6 5.3 4.2 7.8 5.3 8.3C6 8.5 6.6 7.9 7.5 8.4C8.3 8.9 9 9.6 8.6 10.5C8.1 11.7 6.5 12.3 5.3 11.7C2.4 10.3 0.2 6.3 0.2 3C0.2 1.5 1.2 0.4 2.3 0.1Z" fill="#444" stroke="#444" stroke-width="0.7" stroke-linejoin="round"/></svg>
<span class="t" style="top:818px;font-size:14px;color:#333;left:85px;letter-spacing:0.166px;-webkit-text-stroke:0.2px;">International</span>
<span class="t" style="top:818px;font-size:14px;color:#333;right:1224px;letter-spacing:-0.2px;-webkit-text-stroke:0.2px;">10<span style="color:#b0b0b0">m</span> 33<span style="color:#b0b0b0">s</span></span>
<span class="t" style="top:818px;font-size:14px;color:#333;left:406.7px;letter-spacing:-0.137px;-webkit-text-stroke:0.2px;">Antonio Eubanks</span>
<svg class="b" style="left:642.2px;top:816.1px;" width="4.4" height="14" viewBox="0 0 4.4 14"><rect x="0" y="0" width="4.3" height="3.7" rx="1" fill="#1f5bd0"/><rect x="0" y="4.9" width="4.3" height="3.7" rx="1" fill="#1f5bd0"/><rect x="0" y="9.8" width="4.3" height="3.7" rx="1" fill="#1f5bd0"/></svg>
<svg class="b" style="left:70.4px;top:852.4px;" width="9" height="12.2" viewBox="-0.3 -0.3 9.4 12.6"><path d="M2.3 0.1C3.1 -0.1 3.5 1 3.8 2C4.1 3 3.3 3.4 2.9 4C2.6 5.3 4.2 7.8 5.3 8.3C6 8.5 6.6 7.9 7.5 8.4C8.3 8.9 9 9.6 8.6 10.5C8.1 11.7 6.5 12.3 5.3 11.7C2.4 10.3 0.2 6.3 0.2 3C0.2 1.5 1.2 0.4 2.3 0.1Z" fill="#444" stroke="#444" stroke-width="0.7" stroke-linejoin="round"/></svg>
<span class="t" style="top:853px;font-size:14px;color:#333;left:85px;letter-spacing:0.166px;-webkit-text-stroke:0.2px;">International</span>
<span class="t" style="top:853px;font-size:14px;color:#333;right:1224px;letter-spacing:-0.2px;-webkit-text-stroke:0.2px;">10<span style="color:#b0b0b0">m</span> 28<span style="color:#b0b0b0">s</span></span>
<span class="t" style="top:853px;font-size:14px;color:#333;left:406.7px;letter-spacing:-0.028px;-webkit-text-stroke:0.2px;">Heather Boyer</span>
<svg class="b" style="left:642.2px;top:851.1px;" width="4.4" height="14" viewBox="0 0 4.4 14"><rect x="0" y="0" width="4.3" height="3.7" rx="1" fill="#1f5bd0"/><rect x="0" y="4.9" width="4.3" height="3.7" rx="1" fill="#1f5bd0"/><rect x="0" y="9.8" width="4.3" height="3.7" rx="1" fill="#1f5bd0"/></svg>
<div class="b" style="left:652.3px;top:667px;width:14.7px;height:24px;background:#fff;border-radius:7px;"></div>
<div class="b" style="left:656.1px;top:670px;width:6.9px;height:17px;background:#808080;border-radius:3.5px;"></div>
<span class="t" style="top:157px;font-size:13px;color:#444a52;left:708.3px;letter-spacing:-0.41px;-webkit-text-stroke:0.25px;">On Queue</span>
<span class="t" style="top:177px;font-size:20px;color:#203a78;left:708.3px;letter-spacing:-0.322px;-webkit-text-stroke:0.2px;">51</span>
<span class="t" style="top:157px;font-size:13px;color:#444a52;left:803.4px;letter-spacing:-0.215px;-webkit-text-stroke:0.25px;">Off Queue</span>
<span class="t" style="top:177px;font-size:20px;color:#203a78;left:803.4px;-webkit-text-stroke:0.2px;">0</span>
<span class="t" style="top:157px;font-size:13px;color:#444a52;left:1201.7px;letter-spacing:0.191px;-webkit-text-stroke:0.25px;">Interacting</span>
<span class="t" style="top:177px;font-size:20px;color:#203a78;left:1201.7px;letter-spacing:-0.322px;-webkit-text-stroke:0.2px;">74</span>
<span class="t" style="top:157px;font-size:13px;color:#444a52;left:1296.4px;letter-spacing:0.199px;-webkit-text-stroke:0.25px;">Communicating</span>
<span class="t" style="top:177px;font-size:20px;color:#203a78;left:1296.4px;-webkit-text-stroke:0.2px;">0</span>
<span class="t" style="top:157px;font-size:13px;color:#444a52;left:1409.3px;letter-spacing:0.035px;-webkit-text-stroke:0.25px;">Idle</span>
<span class="t" style="top:177px;font-size:20px;color:#203a78;left:1409.3px;-webkit-text-stroke:0.2px;">0</span>
<span class="t" style="top:157px;font-size:13px;color:#444a52;left:1504.3px;letter-spacing:0.013px;-webkit-text-stroke:0.25px;">Not Responding</span>
<span class="t" style="top:177px;font-size:20px;color:#203a78;left:1504.3px;-webkit-text-stroke:0.2px;">3</span>
<span class="t" style="top:179px;font-size:14px;color:#6d7886;left:909px;-webkit-text-stroke:0.2px;">0</span>
<div class="b" style="left:919.3px;top:181.7px;width:8px;height:8px;background:#6bd820;border-radius:50%;"></div>
<span class="t" style="top:179px;font-size:14px;color:#6d7886;left:938.3px;-webkit-text-stroke:0.2px;">0</span>
<div class="b" style="left:948.8px;top:181.7px;width:8px;height:8px;background:#fdb62f;border-radius:50%;"></div>
<span class="t" style="top:179px;font-size:14px;color:#6d7886;left:967.6px;-webkit-text-stroke:0.2px;">0</span>
<div class="b" style="left:978.3px;top:181.7px;width:8px;height:8px;background:#f5081f;border-radius:50%;"></div>
<div class="b" style="left:683px;top:231px;width:240px;height:26px;background:#f6f6f6;border-radius:13px;"></div>
<span class="t" style="top:237px;font-size:14px;color:#8a8a8a;left:695.5px;letter-spacing:0.018px;-webkit-text-stroke:0.2px;">Filter user(s)</span>
<svg class="b" style="left:899px;top:237.5px;" width="14" height="14" viewBox="0 0 14 14"><circle cx="5.6" cy="5.6" r="4.2" fill="none" stroke="#b8b8b8" stroke-width="2.1"/><path d="M9 9L12.4 12.4" stroke="#b8b8b8" stroke-width="2.7" stroke-linecap="round"/></svg>
<span class="t" style="top:237px;font-size:14px;color:#999;left:1343.8px;letter-spacing:-0.508px;-webkit-text-stroke:0.2px;">1 - 50 <span style="color:#bdbdbd">of</span> 97 active agents</span>
<span class="t" style="top:237px;font-size:14px;color:#6aa5f5;left:1503.8px;letter-spacing:-0.657px;-webkit-text-stroke:0.2px;">1 inactive agents</span>
<div class="b" style="left:683px;top:262px;width:930px;height:1.5px;background:#dfe6f3;"></div>
<div class="b" style="left:683px;top:293.8px;width:930px;height:2.4px;background:#2060d0;"></div>
<svg class="b" style="left:689.7px;top:272.7px;" width="12" height="12" viewBox="0 0 12 12"><rect x="0.7" y="0.7" width="10.4" height="10.4" rx="1.8" fill="none" stroke="#444" stroke-width="1.05"/><path d="M2.7 5.9H9.1M5.9 2.7V9.1" stroke="#444" stroke-width="1.05"/></svg>
<span class="t" style="top:270px;font-size:14px;color:#333;left:734.2px;letter-spacing:-0.557px;-webkit-text-stroke:0.2px;">Agent</span>
<svg class="b" style="left:780.9px;top:275.7px;" width="7.6" height="4" viewBox="0 0 7.6 4"><path d="M0 0H7.6L3.8 4Z" fill="#333"/></svg>
<span class="t" style="top:270px;font-size:14px;color:#b8b8b8;right:636.1px;letter-spacing:-0.668px;-webkit-text-stroke:0.2px;">Time in</span>
<span class="t" style="top:270px;font-size:14px;color:#333;left:994.5px;letter-spacing:-0.731px;-webkit-text-stroke:0.2px;">Status</span>
<svg class="b" style="left:1042px;top:272.3px;" width="8.2" height="11.5" viewBox="0 0 8.2 11.5"><path d="M0 4.1H8.2L4.1 0Z" fill="#333"/><path d="M0 7.3H8.2L4.1 11.4Z" fill="#333"/></svg>
<span class="t" style="top:270px;font-size:14px;color:#333;left:1124.4px;letter-spacing:-0.645px;-webkit-text-stroke:0.2px;">Skills</span>
<span class="t" style="top:270px;font-size:14px;color:#333;left:1254.5px;letter-spacing:-0.264px;-webkit-text-stroke:0.2px;">Duration</span>
<span class="t" style="top:270px;font-size:14px;color:#333;left:1384.4px;letter-spacing:-0.369px;-webkit-text-stroke:0.2px;">Duration 2</span>
<span class="t" style="top:270px;font-size:14px;color:#333;left:1514.3px;letter-spacing:-0.369px;-webkit-text-stroke:0.2px;">Duration 3</span>
<div class="b" style="left:683px;top:296px;width:930px;height:35px;background:#f9f9f8;"></div>
<div class="b" style="left:683px;top:331px;width:930px;height:1px;background:#dfe6f3;"></div>
<svg class="b" style="left:689.7px;top:306.7px;" width="12" height="12" viewBox="0 0 12 12"><rect x="0.7" y="0.7" width="10.4" height="10.4" rx="1.8" fill="none" stroke="#444" stroke-width="1.05"/><path d="M2.7 5.9H9.1M5.9 2.7V9.1" stroke="#444" stroke-width="1.05"/></svg>
<div class="b" style="left:713.7px;top:308.4px;width:8.4px;height:8.4px;background:#4dc6f5;border-radius:50%;"></div>
<span class="t" style="top:306px;font-size:14px;color:#2a62c9;left:734.2px;letter-spacing:-0.215px;-webkit-text-stroke:0.2px;">Alexander Gutier…</span>
<span class="t" style="top:307px;font-size:14px;color:#333;right:636.1px;letter-spacing:-0.2px;-webkit-text-stroke:0.2px;">7<span style="color:#b0b0b0">m</span> 26<span style="color:#b0b0b0">s</span></span>
<span class="t" style="top:307px;font-size:14px;color:#333a40;left:994.5px;letter-spacing:0.176px;-webkit-text-stroke:0.2px;">Interacting</span>
<span class="t" style="top:307px;font-size:14px;color:#333;left:1129.6px;-webkit-text-stroke:0.2px;">-</span>
<svg class="b" style="left:1256.1px;top:305.6px;" width="9" height="12.2" viewBox="-0.3 -0.3 9.4 12.6"><path d="M2.3 0.1C3.1 -0.1 3.5 1 3.8 2C4.1 3 3.3 3.4 2.9 4C2.6 5.3 4.2 7.8 5.3 8.3C6 8.5 6.6 7.9 7.5 8.4C8.3 8.9 9 9.6 8.6 10.5C8.1 11.7 6.5 12.3 5.3 11.7C2.4 10.3 0.2 6.3 0.2 3C0.2 1.5 1.2 0.4 2.3 0.1Z" fill="#738090" stroke="#738090" stroke-width="0.7" stroke-linejoin="round"/></svg>
<span class="t" style="top:307px;font-size:14px;color:#333;left:1271.4px;letter-spacing:-0.2px;-webkit-text-stroke:0.2px;">7<span style="color:#b0b0b0">m</span> 26<span style="color:#b0b0b0">s</span></span>
<div class="b" style="left:683px;top:332px;width:930px;height:34px;background:#fff;"></div>
<div class="b" style="left:683px;top:366px;width:930px;height:1px;background:#dfe6f3;"></div>
<svg class="b" style="left:689.7px;top:342.7px;" width="12" height="12" viewBox="0 0 12 12"><rect x="0.7" y="0.7" width="10.4" height="10.4" rx="1.8" fill="none" stroke="#444" stroke-width="1.05"/><path d="M2.7 5.9H9.1M5.9 2.7V9.1" stroke="#444" stroke-width="1.05"/></svg>
<div class="b" style="left:713.7px;top:344.4px;width:8.4px;height:8.4px;background:#4dc6f5;border-radius:50%;"></div>
<span class="t" style="top:342px;font-size:14px;color:#2a62c9;left:734.2px;letter-spacing:-0.006px;-webkit-text-stroke:0.2px;">Andrew Hiles</span>
<span class="t" style="top:343px;font-size:14px;color:#333;right:636.1px;letter-spacing:-0.2px;-webkit-text-stroke:0.2px;">7<span style="color:#b0b0b0">m</span> 37<span style="color:#b0b0b0">s</span></span>
<span class="t" style="top:343px;font-size:14px;color:#333a40;left:994.5px;letter-spacing:0.176px;-webkit-text-stroke:0.2px;">Interacting</span>
<span class="t" style="top:343px;font-size:14px;color:#333;left:1129.6px;-webkit-text-stroke:0.2px;">-</span>
<svg class="b" style="left:1256.1px;top:341.6px;" width="9" height="12.2" viewBox="-0.3 -0.3 9.4 12.6"><path d="M2.3 0.1C3.1 -0.1 3.5 1 3.8 2C4.1 3 3.3 3.4 2.9 4C2.6 5.3 4.2 7.8 5.3 8.3C6 8.5 6.6 7.9 7.5 8.4C8.3 8.9 9 9.6 8.6 10.5C8.1 11.7 6.5 12.3 5.3 11.7C2.4 10.3 0.2 6.3 0.2 3C0.2 1.5 1.2 0.4 2.3 0.1Z" fill="#738090" stroke="#738090" stroke-width="0.7" stroke-linejoin="round"/></svg>
<span class="t" style="top:343px;font-size:14px;color:#333;left:1271.4px;letter-spacing:-0.2px;-webkit-text-stroke:0.2px;">7<span style="color:#b0b0b0">m</span> 37<span style="color:#b0b0b0">s</span></span>
<div class="b" style="left:683px;top:367px;width:930px;height:34px;background:#f9f9f8;"></div>
<div class="b" style="left:683px;top:401px;width:930px;height:1px;background:#dfe6f3;"></div>
<svg class="b" style="left:689.7px;top:377.7px;" width="12" height="12" viewBox="0 0 12 12"><rect x="0.7" y="0.7" width="10.4" height="10.4" rx="1.8" fill="none" stroke="#bbb" stroke-width="1.05"/><path d="M2.7 5.9H9.1M5.9 2.7V9.1" stroke="#bbb" stroke-width="1.05"/></svg>
<div class="b" style="left:713.7px;top:379.4px;width:8.4px;height:8.4px;background:#555;border-radius:50%;"></div>
<span class="t" style="top:377px;font-size:14px;color:#2a62c9;left:734.2px;letter-spacing:0.057px;-webkit-text-stroke:0.2px;">Anthony Cronin</span>
<span class="t" style="top:378px;font-size:14px;color:#333;right:636.1px;letter-spacing:-0.2px;-webkit-text-stroke:0.2px;">7 <span style="color:#b0b0b0">days</span></span>
<span class="t" style="top:378px;font-size:14px;color:#333a40;left:994.5px;letter-spacing:0.299px;-webkit-text-stroke:0.2px;">Offline</span>
<span class="t" style="top:378px;font-size:14px;color:#333;left:1129.6px;-webkit-text-stroke:0.2px;">-</span>
<div class="b" style="left:683px;top:402px;width:930px;height:34px;background:#fff;"></div>
<div class="b" style="left:683px;top:436px;width:930px;height:1px;background:#dfe6f3;"></div>
<svg class="b" style="left:689.7px;top:412.7px;" width="12" height="12" viewBox="0 0 12 12"><rect x="0.7" y="0.7" width="10.4" height="10.4" rx="1.8" fill="none" stroke="#444" stroke-width="1.05"/><path d="M2.7 5.9H9.1M5.9 2.7V9.1" stroke="#444" stroke-width="1.05"/></svg>
<div class="b" style="left:713.7px;top:414.4px;width:8.4px;height:8.4px;background:#4dc6f5;border-radius:50%;"></div>
<span class="t" style="top:412px;font-size:14px;color:#2a62c9;left:734.2px;letter-spacing:-0.13px;-webkit-text-stroke:0.2px;">Antonio Eubanks</span>
<span class="t" style="top:413px;font-size:14px;color:#333;right:636.1px;letter-spacing:-0.2px;-webkit-text-stroke:0.2px;">10<span style="color:#b0b0b0">m</span> 32<span style="color:#b0b0b0">s</span></span>
<span class="t" style="top:413px;font-size:14px;color:#333a40;left:994.5px;letter-spacing:0.176px;-webkit-text-stroke:0.2px;">Interacting</span>
<span class="t" style="top:413px;font-size:14px;color:#333;left:1129.6px;-webkit-text-stroke:0.2px;">-</span>
<svg class="b" style="left:1256.1px;top:411.6px;" width="9" height="12.2" viewBox="-0.3 -0.3 9.4 12.6"><path d="M2.3 0.1C3.1 -0.1 3.5 1 3.8 2C4.1 3 3.3 3.4 2.9 4C2.6 5.3 4.2 7.8 5.3 8.3C6 8.5 6.6 7.9 7.5 8.4C8.3 8.9 9 9.6 8.6 10.5C8.1 11.7 6.5 12.3 5.3 11.7C2.4 10.3 0.2 6.3 0.2 3C0.2 1.5 1.2 0.4 2.3 0.1Z" fill="#738090" stroke="#738090" stroke-width="0.7" stroke-linejoin="round"/></svg>
<span class="t" style="top:413px;font-size:14px;color:#333;left:1271.4px;letter-spacing:-0.2px;-webkit-text-stroke:0.2px;">10<span style="color:#b0b0b0">m</span> 32<span style="color:#b0b0b0">s</span></span>
<div class="b" style="left:683px;top:437px;width:930px;height:34px;background:#f9f9f8;"></div>
<div class="b" style="left:683px;top:471px;width:930px;height:1px;background:#dfe6f3;"></div>
<svg class="b" style="left:689.7px;top:447.7px;" width="12" height="12" viewBox="0 0 12 12"><rect x="0.7" y="0.7" width="10.4" height="10.4" rx="1.8" fill="none" stroke="#444" stroke-width="1.05"/><path d="M2.7 5.9H9.1M5.9 2.7V9.1" stroke="#444" stroke-width="1.05"/></svg>
<div class="b" style="left:713.7px;top:449.4px;width:8.4px;height:8.4px;background:#4dc6f5;border-radius:50%;"></div>
<span class="t" style="top:447px;font-size:14px;color:#2a62c9;left:734.2px;letter-spacing:0.04px;-webkit-text-stroke:0.2px;">Arthur Snively</span>
<span class="t" style="top:448px;font-size:14px;color:#333;right:636.1px;letter-spacing:-0.2px;-webkit-text-stroke:0.2px;">11<span style="color:#b0b0b0">m</span> 23<span style="color:#b0b0b0">s</span></span>
<span class="t" style="top:448px;font-size:14px;color:#333a40;left:994.5px;letter-spacing:0.176px;-webkit-text-stroke:0.2px;">Interacting</span>
<span class="t" style="top:448px;font-size:14px;color:#333;left:1129.6px;-webkit-text-stroke:0.2px;">-</span>
<svg class="b" style="left:1256.1px;top:446.6px;" width="9" height="12.2" viewBox="-0.3 -0.3 9.4 12.6"><path d="M2.3 0.1C3.1 -0.1 3.5 1 3.8 2C4.1 3 3.3 3.4 2.9 4C2.6 5.3 4.2 7.8 5.3 8.3C6 8.5 6.6 7.9 7.5 8.4C8.3 8.9 9 9.6 8.6 10.5C8.1 11.7 6.5 12.3 5.3 11.7C2.4 10.3 0.2 6.3 0.2 3C0.2 1.5 1.2 0.4 2.3 0.1Z" fill="#738090" stroke="#738090" stroke-width="0.7" stroke-linejoin="round"/></svg>
<span class="t" style="top:448px;font-size:14px;color:#333;left:1271.4px;letter-spacing:-0.2px;-webkit-text-stroke:0.2px;">11<span style="color:#b0b0b0">m</span> 23<span style="color:#b0b0b0">s</span></span>
<div class="b" style="left:683px;top:472px;width:930px;height:34px;background:#fff;"></div>
<div class="b" style="left:683px;top:506px;width:930px;height:1px;background:#dfe6f3;"></div>
<svg class="b" style="left:689.7px;top:482.7px;" width="12" height="12" viewBox="0 0 12 12"><rect x="0.7" y="0.7" width="10.4" height="10.4" rx="1.8" fill="none" stroke="#444" stroke-width="1.05"/><path d="M2.7 5.9H9.1M5.9 2.7V9.1" stroke="#444" stroke-width="1.05"/></svg>
<div class="b" style="left:713.7px;top:484.4px;width:8.4px;height:8.4px;background:#4dc6f5;border-radius:50%;"></div>
<span class="t" style="top:482px;font-size:14px;color:#2a62c9;left:734.2px;letter-spacing:-0.163px;-webkit-text-stroke:0.2px;">Ashly Crisp</span>
<span class="t" style="top:483px;font-size:14px;color:#333;right:636.1px;letter-spacing:-0.2px;-webkit-text-stroke:0.2px;">9<span style="color:#b0b0b0">m</span> 54<span style="color:#b0b0b0">s</span></span>
<span class="t" style="top:483px;font-size:14px;color:#333a40;left:994.5px;letter-spacing:0.176px;-webkit-text-stroke:0.2px;">Interacting</span>
<span class="t" style="top:483px;font-size:14px;color:#333;left:1129.6px;-webkit-text-stroke:0.2px;">-</span>
<svg class="b" style="left:1256.1px;top:481.6px;" width="9" height="12.2" viewBox="-0.3 -0.3 9.4 12.6"><path d="M2.3 0.1C3.1 -0.1 3.5 1 3.8 2C4.1 3 3.3 3.4 2.9 4C2.6 5.3 4.2 7.8 5.3 8.3C6 8.5 6.6 7.9 7.5 8.4C8.3 8.9 9 9.6 8.6 10.5C8.1 11.7 6.5 12.3 5.3 11.7C2.4 10.3 0.2 6.3 0.2 3C0.2 1.5 1.2 0.4 2.3 0.1Z" fill="#738090" stroke="#738090" stroke-width="0.7" stroke-linejoin="round"/></svg>
<span class="t" style="top:483px;font-size:14px;color:#333;left:1271.4px;letter-spacing:-0.2px;-webkit-text-stroke:0.2px;">9<span style="color:#b0b0b0">m</span> 54<span style="color:#b0b0b0">s</span></span>
<div class="b" style="left:683px;top:507px;width:930px;height:34px;background:#f9f9f8;"></div>
<div class="b" style="left:683px;top:541px;width:930px;height:1px;background:#dfe6f3;"></div>
<svg class="b" style="left:689.7px;top:517.7px;" width="12" height="12" viewBox="0 0 12 12"><rect x="0.7" y="0.7" width="10.4" height="10.4" rx="1.8" fill="none" stroke="#bbb" stroke-width="1.05"/><path d="M2.7 5.9H9.1M5.9 2.7V9.1" stroke="#bbb" stroke-width="1.05"/></svg>
<div class="b" style="left:713.7px;top:519.4px;width:8.4px;height:8.4px;background:#555;border-radius:50%;"></div>
<span class="t" style="top:517px;font-size:14px;color:#2a62c9;left:734.2px;letter-spacing:-0.063px;-webkit-text-stroke:0.2px;">Barbara Bennett</span>
<span class="t" style="top:518px;font-size:14px;color:#333;right:636.1px;letter-spacing:-0.2px;-webkit-text-stroke:0.2px;">7 <span style="color:#b0b0b0">days</span></span>
<span class="t" style="top:518px;font-size:14px;color:#333a40;left:994.5px;letter-spacing:0.299px;-webkit-text-stroke:0.2px;">Offline</span>
<span class="t" style="top:518px;font-size:14px;color:#333;left:1129.6px;-webkit-text-stroke:0.2px;">-</span>
<div class="b" style="left:683px;top:542px;width:930px;height:34px;background:#fff;"></div>
<div class="b" style="left:683px;top:576px;width:930px;height:1px;background:#dfe6f3;"></div>
<svg class="b" style="left:689.7px;top:552.7px;" width="12" height="12" viewBox="0 0 12 12"><rect x="0.7" y="0.7" width="10.4" height="10.4" rx="1.8" fill="none" stroke="#444" stroke-width="1.05"/><path d="M2.7 5.9H9.1M5.9 2.7V9.1" stroke="#444" stroke-width="1.05"/></svg>
<div class="b" style="left:713.7px;top:554.4px;width:8.4px;height:8.4px;background:#4dc6f5;border-radius:50%;"></div>
<span class="t" style="top:552px;font-size:14px;color:#2a62c9;left:734.2px;letter-spacing:-0.07px;-webkit-text-stroke:0.2px;">Bennie Quinn</span>
<span class="t" style="top:553px;font-size:14px;color:#333;right:636.1px;letter-spacing:-0.2px;-webkit-text-stroke:0.2px;">8<span style="color:#b0b0b0">m</span> 4<span style="color:#b0b0b0">s</span></span>
<span class="t" style="top:553px;font-size:14px;color:#333a40;left:994.5px;letter-spacing:0.176px;-webkit-text-stroke:0.2px;">Interacting</span>
<span class="t" style="top:553px;font-size:14px;color:#333;left:1129.6px;-webkit-text-stroke:0.2px;">-</span>
<svg class="b" style="left:1256.1px;top:551.6px;" width="9" height="12.2" viewBox="-0.3 -0.3 9.4 12.6"><path d="M2.3 0.1C3.1 -0.1 3.5 1 3.8 2C4.1 3 3.3 3.4 2.9 4C2.6 5.3 4.2 7.8 5.3 8.3C6 8.5 6.6 7.9 7.5 8.4C8.3 8.9 9 9.6 8.6 10.5C8.1 11.7 6.5 12.3 5.3 11.7C2.4 10.3 0.2 6.3 0.2 3C0.2 1.5 1.2 0.4 2.3 0.1Z" fill="#738090" stroke="#738090" stroke-width="0.7" stroke-linejoin="round"/></svg>
<span class="t" style="top:553px;font-size:14px;color:#333;left:1271.4px;letter-spacing:-0.2px;-webkit-text-stroke:0.2px;">8<span style="color:#b0b0b0">m</span> 4<span style="color:#b0b0b0">s</span></span>
<div class="b" style="left:683px;top:577px;width:930px;height:34px;background:#f9f9f8;"></div>
<div class="b" style="left:683px;top:611px;width:930px;height:1px;background:#dfe6f3;"></div>
<svg class="b" style="left:689.7px;top:587.7px;" width="12" height="12" viewBox="0 0 12 12"><rect x="0.7" y="0.7" width="10.4" height="10.4" rx="1.8" fill="none" stroke="#444" stroke-width="1.05"/><path d="M2.7 5.9H9.1M5.9 2.7V9.1" stroke="#444" stroke-width="1.05"/></svg>
<div class="b" style="left:713.7px;top:589.4px;width:8.4px;height:8.4px;background:#4dc6f5;border-radius:50%;"></div>
<span class="t" style="top:587px;font-size:14px;color:#2a62c9;left:734.2px;letter-spacing:-0.338px;-webkit-text-stroke:0.2px;">Benny Klassen</span>
<span class="t" style="top:588px;font-size:14px;color:#333;right:636.1px;letter-spacing:-0.2px;-webkit-text-stroke:0.2px;">2<span style="color:#b0b0b0">m</span> 8<span style="color:#b0b0b0">s</span></span>
<span class="t" style="top:588px;font-size:14px;color:#333a40;left:994.5px;letter-spacing:0.176px;-webkit-text-stroke:0.2px;">Interacting</span>
<span class="t" style="top:588px;font-size:14px;color:#333;left:1129.6px;-webkit-text-stroke:0.2px;">-</span>
<svg class="b" style="left:1256.1px;top:586.6px;" width="9" height="12.2" viewBox="-0.3 -0.3 9.4 12.6"><path d="M2.3 0.1C3.1 -0.1 3.5 1 3.8 2C4.1 3 3.3 3.4 2.9 4C2.6 5.3 4.2 7.8 5.3 8.3C6 8.5 6.6 7.9 7.5 8.4C8.3 8.9 9 9.6 8.6 10.5C8.1 11.7 6.5 12.3 5.3 11.7C2.4 10.3 0.2 6.3 0.2 3C0.2 1.5 1.2 0.4 2.3 0.1Z" fill="#738090" stroke="#738090" stroke-width="0.7" stroke-linejoin="round"/></svg>
<span class="t" style="top:588px;font-size:14px;color:#333;left:1271.4px;letter-spacing:-0.2px;-webkit-text-stroke:0.2px;">2<span style="color:#b0b0b0">m</span> 9<span style="color:#b0b0b0">s</span></span>
<div class="b" style="left:683px;top:612px;width:930px;height:34px;background:#fff;"></div>
<div class="b" style="left:683px;top:646px;width:930px;height:1px;background:#dfe6f3;"></div>
<svg class="b" style="left:689.7px;top:622.7px;" width="12" height="12" viewBox="0 0 12 12"><rect x="0.7" y="0.7" width="10.4" height="10.4" rx="1.8" fill="none" stroke="#444" stroke-width="1.05"/><path d="M2.7 5.9H9.1M5.9 2.7V9.1" stroke="#444" stroke-width="1.05"/></svg>
<div class="b" style="left:713.7px;top:624.4px;width:8.4px;height:8.4px;background:#4dc6f5;border-radius:50%;"></div>
<span class="t" style="top:622px;font-size:14px;color:#2a62c9;left:734.2px;letter-spacing:-0.003px;-webkit-text-stroke:0.2px;">Betty Giddings</span>
<span class="t" style="top:623px;font-size:14px;color:#333;right:636.1px;letter-spacing:-0.2px;-webkit-text-stroke:0.2px;">1<span style="color:#b0b0b0">m</span> 50<span style="color:#b0b0b0">s</span></span>
<span class="t" style="top:623px;font-size:14px;color:#333a40;left:994.5px;letter-spacing:0.176px;-webkit-text-stroke:0.2px;">Interacting</span>
<span class="t" style="top:623px;font-size:14px;color:#333;left:1129.6px;-webkit-text-stroke:0.2px;">-</span>
<svg class="b" style="left:1256.1px;top:621.6px;" width="9" height="12.2" viewBox="-0.3 -0.3 9.4 12.6"><path d="M2.3 0.1C3.1 -0.1 3.5 1 3.8 2C4.1 3 3.3 3.4 2.9 4C2.6 5.3 4.2 7.8 5.3 8.3C6 8.5 6.6 7.9 7.5 8.4C8.3 8.9 9 9.6 8.6 10.5C8.1 11.7 6.5 12.3 5.3 11.7C2.4 10.3 0.2 6.3 0.2 3C0.2 1.5 1.2 0.4 2.3 0.1Z" fill="#738090" stroke="#738090" stroke-width="0.7" stroke-linejoin="round"/></svg>
<span class="t" style="top:623px;font-size:14px;color:#333;left:1271.4px;letter-spacing:-0.2px;-webkit-text-stroke:0.2px;">1<span style="color:#b0b0b0">m</span> 51<span style="color:#b0b0b0">s</span></span>
<div class="b" style="left:683px;top:647px;width:930px;height:34px;background:#f9f9f8;"></div>
<div class="b" style="left:683px;top:681px;width:930px;height:1px;background:#dfe6f3;"></div>
<svg class="b" style="left:689.7px;top:657.7px;" width="12" height="12" viewBox="0 0 12 12"><rect x="0.7" y="0.7" width="10.4" height="10.4" rx="1.8" fill="none" stroke="#bbb" stroke-width="1.05"/><path d="M2.7 5.9H9.1M5.9 2.7V9.1" stroke="#bbb" stroke-width="1.05"/></svg>
<div class="b" style="left:713.7px;top:659.4px;width:8.4px;height:8.4px;background:#555;border-radius:50%;"></div>
<span class="t" style="top:657px;font-size:14px;color:#2a62c9;left:734.2px;letter-spacing:-0.007px;-webkit-text-stroke:0.2px;">Beverly Quiroz</span>
<span class="t" style="top:658px;font-size:14px;color:#333;right:636.1px;letter-spacing:-0.2px;-webkit-text-stroke:0.2px;">1,344 <span style="color:#b0b0b0">days</span></span>
<span class="t" style="top:658px;font-size:14px;color:#333a40;left:994.5px;letter-spacing:0.299px;-webkit-text-stroke:0.2px;">Offline</span>
<span class="t" style="top:658px;font-size:14px;color:#333;left:1129.6px;-webkit-text-stroke:0.2px;">-</span>
<div class="b" style="left:683px;top:682px;width:930px;height:34px;background:#fff;"></div>
<div class="b" style="left:683px;top:716px;width:930px;height:1px;background:#dfe6f3;"></div>
<svg class="b" style="left:689.7px;top:692.7px;" width="12" height="12" viewBox="0 0 12 12"><rect x="0.7" y="0.7" width="10.4" height="10.4" rx="1.8" fill="none" stroke="#444" stroke-width="1.05"/><path d="M2.7 5.9H9.1M5.9 2.7V9.1" stroke="#444" stroke-width="1.05"/></svg>
<div class="b" style="left:713.7px;top:694.4px;width:8.4px;height:8.4px;background:#4dc6f5;border-radius:50%;"></div>
<span class="t" style="top:692px;font-size:14px;color:#2a62c9;left:734.2px;letter-spacing:-0.122px;-webkit-text-stroke:0.2px;">Brandon Herman</span>
<span class="t" style="top:693px;font-size:14px;color:#333;right:636.1px;letter-spacing:-0.2px;-webkit-text-stroke:0.2px;">9<span style="color:#b0b0b0">m</span> 19<span style="color:#b0b0b0">s</span></span>
<span class="t" style="top:693px;font-size:14px;color:#333a40;left:994.5px;letter-spacing:0.176px;-webkit-text-stroke:0.2px;">Interacting</span>
<span class="t" style="top:693px;font-size:14px;color:#333;left:1129.6px;-webkit-text-stroke:0.2px;">-</span>
<svg class="b" style="left:1256.1px;top:691.6px;" width="9" height="12.2" viewBox="-0.3 -0.3 9.4 12.6"><path d="M2.3 0.1C3.1 -0.1 3.5 1 3.8 2C4.1 3 3.3 3.4 2.9 4C2.6 5.3 4.2 7.8 5.3 8.3C6 8.5 6.6 7.9 7.5 8.4C8.3 8.9 9 9.6 8.6 10.5C8.1 11.7 6.5 12.3 5.3 11.7C2.4 10.3 0.2 6.3 0.2 3C0.2 1.5 1.2 0.4 2.3 0.1Z" fill="#738090" stroke="#738090" stroke-width="0.7" stroke-linejoin="round"/></svg>
<span class="t" style="top:693px;font-size:14px;color:#333;left:1271.4px;letter-spacing:-0.2px;-webkit-text-stroke:0.2px;">9<span style="color:#b0b0b0">m</span> 19<span style="color:#b0b0b0">s</span></span>
<div class="b" style="left:683px;top:717px;width:930px;height:34px;background:#f9f9f8;"></div>
<div class="b" style="left:683px;top:751px;width:930px;height:1px;background:#dfe6f3;"></div>
<svg class="b" style="left:689.7px;top:727.7px;" width="12" height="12" viewBox="0 0 12 12"><rect x="0.7" y="0.7" width="10.4" height="10.4" rx="1.8" fill="none" stroke="#bbb" stroke-width="1.05"/><path d="M2.7 5.9H9.1M5.9 2.7V9.1" stroke="#bbb" stroke-width="1.05"/></svg>
<div class="b" style="left:713.7px;top:729.4px;width:8.4px;height:8.4px;background:#555;border-radius:50%;"></div>
<span class="t" style="top:727px;font-size:14px;color:#2a62c9;left:734.2px;letter-spacing:-0.187px;-webkit-text-stroke:0.2px;">Carl Jordan</span>
<span class="t" style="top:728px;font-size:14px;color:#333;right:636.1px;letter-spacing:-0.2px;-webkit-text-stroke:0.2px;">1,239 <span style="color:#b0b0b0">days</span></span>
<span class="t" style="top:728px;font-size:14px;color:#333a40;left:994.5px;letter-spacing:0.299px;-webkit-text-stroke:0.2px;">Offline</span>
<svg class="b" style="left:1124px;top:730.5px;" width="5" height="8" viewBox="0 0 5 8"><path d="M0 0V8L4.6 4Z" fill="#333"/></svg>
<span class="t" style="top:728px;font-size:14px;color:#2a62c9;left:1134.5px;letter-spacing:-0.235px;-webkit-text-stroke:0.2px;">Construction, O…</span>
<div class="b" style="left:683px;top:752px;width:930px;height:34px;background:#fff;"></div>
<div class="b" style="left:683px;top:786px;width:930px;height:1px;background:#dfe6f3;"></div>
<svg class="b" style="left:689.7px;top:762.7px;" width="12" height="12" viewBox="0 0 12 12"><rect x="0.7" y="0.7" width="10.4" height="10.4" rx="1.8" fill="none" stroke="#444" stroke-width="1.05"/><path d="M2.7 5.9H9.1M5.9 2.7V9.1" stroke="#444" stroke-width="1.05"/></svg>
<div class="b" style="left:713.7px;top:764.4px;width:8.4px;height:8.4px;background:#4dc6f5;border-radius:50%;"></div>
<span class="t" style="top:762px;font-size:14px;color:#2a62c9;left:734.2px;letter-spacing:0.039px;-webkit-text-stroke:0.2px;">Celia Miller</span>
<span class="t" style="top:763px;font-size:14px;color:#333;right:636.1px;letter-spacing:-0.2px;-webkit-text-stroke:0.2px;">1<span style="color:#b0b0b0">m</span> 5<span style="color:#b0b0b0">s</span></span>
<span class="t" style="top:763px;font-size:14px;color:#333a40;left:994.5px;letter-spacing:0.176px;-webkit-text-stroke:0.2px;">Interacting</span>
<span class="t" style="top:763px;font-size:14px;color:#333;left:1129.6px;-webkit-text-stroke:0.2px;">-</span>
<svg class="b" style="left:1256.1px;top:761.6px;" width="9" height="12.2" viewBox="-0.3 -0.3 9.4 12.6"><path d="M2.3 0.1C3.1 -0.1 3.5 1 3.8 2C4.1 3 3.3 3.4 2.9 4C2.6 5.3 4.2 7.8 5.3 8.3C6 8.5 6.6 7.9 7.5 8.4C8.3 8.9 9 9.6 8.6 10.5C8.1 11.7 6.5 12.3 5.3 11.7C2.4 10.3 0.2 6.3 0.2 3C0.2 1.5 1.2 0.4 2.3 0.1Z" fill="#738090" stroke="#738090" stroke-width="0.7" stroke-linejoin="round"/></svg>
<span class="t" style="top:763px;font-size:14px;color:#333;left:1271.4px;letter-spacing:-0.2px;-webkit-text-stroke:0.2px;">1<span style="color:#b0b0b0">m</span> 5<span style="color:#b0b0b0">s</span></span>
<div class="b" style="left:683px;top:787px;width:930px;height:34px;background:#f9f9f8;"></div>
<div class="b" style="left:683px;top:821px;width:930px;height:1px;background:#dfe6f3;"></div>
<svg class="b" style="left:689.7px;top:797.7px;" width="12" height="12" viewBox="0 0 12 12"><rect x="0.7" y="0.7" width="10.4" height="10.4" rx="1.8" fill="none" stroke="#bbb" stroke-width="1.05"/><path d="M2.7 5.9H9.1M5.9 2.7V9.1" stroke="#bbb" stroke-width="1.05"/></svg>
<div class="b" style="left:713.7px;top:799.4px;width:8.4px;height:8.4px;background:#555;border-radius:50%;"></div>
<span class="t" style="top:797px;font-size:14px;color:#2a62c9;left:734.2px;letter-spacing:-0.262px;-webkit-text-stroke:0.2px;">Celina Carson</span>
<span class="t" style="top:798px;font-size:14px;color:#333;right:636.1px;letter-spacing:-0.2px;-webkit-text-stroke:0.2px;">1,351 <span style="color:#b0b0b0">days</span></span>
<span class="t" style="top:798px;font-size:14px;color:#333a40;left:994.5px;letter-spacing:0.299px;-webkit-text-stroke:0.2px;">Offline</span>
<span class="t" style="top:798px;font-size:14px;color:#333;left:1129.6px;-webkit-text-stroke:0.2px;">-</span>
<div class="b" style="left:683px;top:827.5px;width:930px;height:1px;background:#e6ecf6;"></div>
<div class="b" style="left:683px;top:829.5px;width:930px;height:12px;background:#fff;"></div>
<div class="b" style="left:686px;top:831.8px;width:840px;height:8.2px;background:#c1c1c1;border-radius:4.1px;"></div>
<div class="b" style="left:683px;top:841.6px;width:930px;height:3px;background:#e4e9f4;"></div>
<span class="t" style="top:853px;font-size:12.5px;color:#9a9a9a;left:684px;letter-spacing:-0.051px;">Agent List Updated: Feb 7, 2020 2:29 PM</span>
<svg class="b" style="left:1108px;top:856.5px;" width="10" height="13" viewBox="0 0 10 13"><path d="M7.5 1.5L2.5 6.5L7.5 11.5" fill="none" stroke="#c5cfe0" stroke-width="2.5"/></svg>
<div class="b" style="left:1126.7px;top:853px;width:20.4px;height:20.4px;background:#1c3472;border-radius:50%;"></div>
<span class="t" style="top:856px;font-size:14.5px;color:#fff;left:1136.9px;font-weight:700;transform:translateX(-50%);">1</span>
<span class="t" style="top:856px;font-size:14.5px;color:#333;left:1155.3px;-webkit-text-stroke:0.2px;">2</span>
<svg class="b" style="left:1178px;top:856.5px;" width="10" height="13" viewBox="0 0 10 13"><path d="M2.5 1.5L7.5 6.5L2.5 11.5" fill="none" stroke="#1c3472" stroke-width="2.6"/></svg>
<div class="b" style="left:330px;top:896px;width:980px;height:40px;background:transparent;box-shadow:0 0 42px 14px rgba(0,0,0,0.2);border-radius:20px;"></div>
</div></body></html>
